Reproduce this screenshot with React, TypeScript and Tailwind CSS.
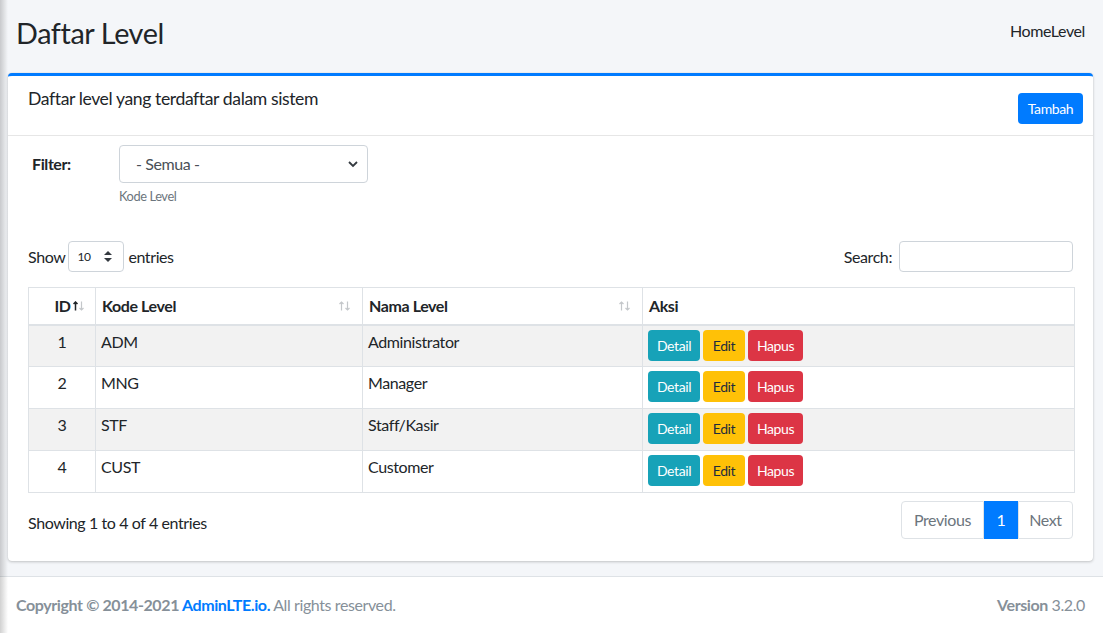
import React from "react";

const rows = [
  { id: 1, kode: "ADM", nama: "Administrator" },
  { id: 2, kode: "MNG", nama: "Manager" },
  { id: 3, kode: "STF", nama: "Staff/Kasir" },
  { id: 4, kode: "CUST", nama: "Customer" },
];

function Arrows({ active }: { active?: boolean }) {
  return (
    <svg width="11" height="10" viewBox="0 0 11 10">
      <path
        d="M2.5 9.5 V1 M0.5 3 L2.5 1 L4.5 3"
        stroke={active ? "#212529" : "#c4c7ca"}
        strokeWidth={active ? 1.5 : 1.2}
        fill="none"
      />
      <path d="M8.5 0.5 V9 M6.5 7 L8.5 9 L10.5 7" stroke="#c4c7ca" strokeWidth="1.2" fill="none" />
    </svg>
  );
}

export default function App() {
  return (
    <div className="relative w-[1103px] h-[633px] overflow-hidden bg-[#f4f6f9] text-[#212529] tracking-[-0.025em] [font-family:Lato,'Noto_Sans',sans-serif]">
      <div className="flex flex-col h-full">
        {/* content header */}
        <div className="h-[73px] flex items-start justify-between pl-4 pr-[18px]">
          <h1 className="text-[28.8px] leading-[1.2] mt-[16px] font-normal">Daftar Level</h1>
          <div className="mt-[19px] text-[16px] leading-[24px]">HomeLevel</div>
        </div>

        {/* card */}
        <div className="pl-2 pr-[10px]">
          <div className="h-[488px] bg-white rounded-[4px] border-t-[3px] border-[#007bff] shadow-[0_0_1px_rgba(0,0,0,0.125),0_1px_3px_rgba(0,0,0,0.2)] flex flex-col">
            <div className="h-[60px] border-b border-[#e6e6e6] flex justify-between pl-5 pr-[10px]">
              <div className="mt-[12px] text-[17.6px] leading-[21px]">Daftar level yang terdaftar dalam sistem</div>
              <button className="mt-[17px] h-[31px] w-[65px] rounded-[4px] bg-[#007bff] text-white text-[14px] leading-[21px]">
                Tambah
              </button>
            </div>

            <div className="px-5 flex flex-col">
              {/* filter */}
              <div className="mt-[9px] flex">
                <div className="w-[91px] pl-[4px] pt-[7px] font-bold text-[16px] leading-[24px]">Filter:</div>
                <div className="flex flex-col">
                  <div className="w-[249px] h-[38px] border border-[#ced4da] rounded-[4px] flex items-center justify-between pl-[16px] pr-[9px] text-[#495057] text-[16px]">
                    <span>- Semua -</span>
                    <svg width="10" height="8" viewBox="0 0 10 8">
                      <path d="M1 2 L5 6 L9 2" stroke="#343a40" strokeWidth="1.8" fill="none" />
                    </svg>
                  </div>
                  <div className="mt-[4px] text-[12.8px] leading-[19px] text-[#6c757d]">Kode Level</div>
                </div>
              </div>

              {/* show / search */}
              <div className="mt-[35px] flex justify-between items-center h-[31px]">
                <div className="flex items-center gap-[4px] text-[16px]">
                  <span className="mr-[-1px]">Show</span>
                  <div className="w-[56px] h-[31px] border border-[#ced4da] rounded-[4px] flex items-center justify-between pl-[8px] pr-[11px]">
                    <span className="text-[12px]">10</span>
                    <svg width="8" height="11" viewBox="0 0 8 11">
                      <path d="M4 0 L8 4 L0 4 Z M0 7 L8 7 L4 11 Z" fill="#343a40" />
                    </svg>
                  </div>
                  <span>entries</span>
                </div>
                <div className="flex items-center gap-[7px] text-[16px]">
                  <span>Search:</span>
                  <div className="w-[174px] h-[31px] border border-[#ced4da] rounded-[4px]" />
                </div>
              </div>

              {/* table */}
              <table className="mt-[15px] w-[1047px] border-collapse text-[16px] leading-[24px]">
                <thead>
                  <tr className="h-[37px]">
                    <th className="w-[67px] border border-[#dee2e6] border-b-2 pl-[14px] pr-0 font-bold align-top pt-[6px]">
                      <div className="flex items-center justify-center gap-[2px]">
                        <span>ID</span>
                        <Arrows active />
                      </div>
                    </th>
                    <th className="w-[267px] border border-[#dee2e6] border-b-2 pl-[6px] pr-[12px] text-left font-bold align-top pt-[6px]">
                      <div className="flex items-center justify-between">
                        <span>Kode Level</span>
                        <Arrows />
                      </div>
                    </th>
                    <th className="w-[280px] border border-[#dee2e6] border-b-2 pl-[6px] pr-[12px] text-left font-bold align-top pt-[6px]">
                      <div className="flex items-center justify-between">
                        <span>Nama Level</span>
                        <Arrows />
                      </div>
                    </th>
                    <th className="border border-[#dee2e6] border-b-2 px-[6px] text-left font-bold align-top pt-[6px]">Aksi</th>
                  </tr>
                </thead>
                <tbody>
                  {rows.map((r, i) => (
                    <tr key={r.id} className={`h-[42px] ${i % 2 === 0 ? "bg-[#f2f2f2]" : "bg-white"}`}>
                      <td className="border border-[#dee2e6] text-center align-top pt-[4px] px-[6px]">{r.id}</td>
                      <td className="border border-[#dee2e6] align-top pt-[4px] px-[5px]">{r.kode}</td>
                      <td className="border border-[#dee2e6] align-top pt-[4px] px-[5px]">{r.nama}</td>
                      <td className="border border-[#dee2e6] align-top pt-[4px] px-[5px]">
                        <div className="flex gap-[3px] text-[14px] leading-[21px]">
                          <span className="h-[31px] w-[52px] flex items-center justify-center rounded-[4px] bg-[#17a2b8] text-white">Detail</span>
                          <span className="h-[31px] w-[42px] flex items-center justify-center rounded-[4px] bg-[#ffc107] text-[#1f2d3d]">Edit</span>
                          <span className="h-[31px] w-[55px] flex items-center justify-center rounded-[4px] bg-[#dc3545] text-white">Hapus</span>
                        </div>
                      </td>
                    </tr>
                  ))}
                </tbody>
              </table>

              {/* info + pagination */}
              <div className="mt-[8px] h-[38px] flex items-center justify-between">
                <span className="text-[16px] pt-[5px]">Showing 1 to 4 of 4 entries</span>
                <div className="flex h-[38px] text-[16px]">
                  <span className="w-[83px] flex items-center justify-center border border-[#dee2e6] rounded-l-[4px] text-[#6c757d]">Previous</span>
                  <span className="w-[34px] flex items-center justify-center bg-[#007bff] text-white">1</span>
                  <span className="w-[55px] flex items-center justify-center border border-[#dee2e6] rounded-r-[4px] text-[#6c757d]">Next</span>
                </div>
              </div>
            </div>
          </div>
        </div>

        {/* footer */}
        <div className="mt-[15px] h-[57px] border-t border-[#dee2e6] bg-white flex items-center justify-between pl-4 pr-[18px] text-[16px] text-[#869099]">
          <div>
            <span className="font-bold">Copyright © 2014-2021 </span>
            <span className="font-bold text-[#007bff]">AdminLTE.io.</span>
            <span> All rights reserved.</span>
          </div>
          <div>
            <span className="font-bold">Version</span> 3.2.0
          </div>
        </div>
      </div>

      {/* sidebar shadow */}
      <div className="pointer-events-none absolute inset-y-0 left-0 w-[8px] bg-gradient-to-r from-[rgba(0,0,0,0.18)] to-transparent" />
    </div>
  );
}
